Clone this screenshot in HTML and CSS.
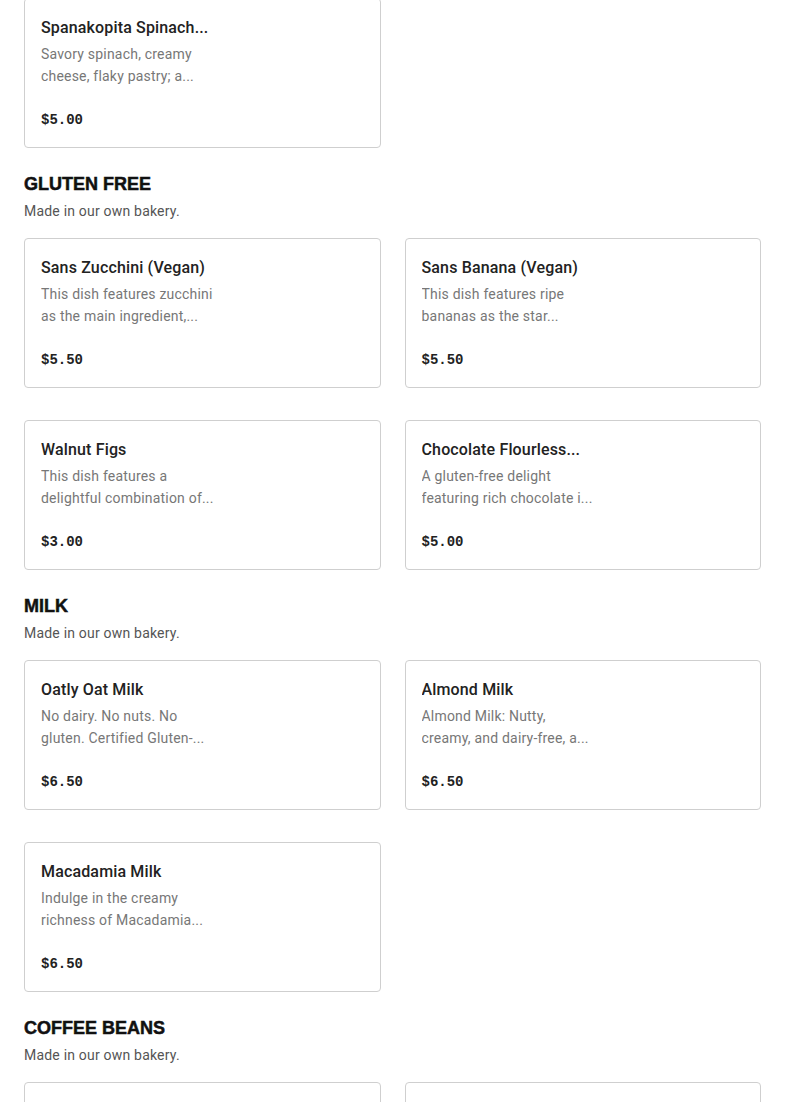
FILE: index.html
```html
<!DOCTYPE html>
<html lang="en">
<head>
<meta charset="utf-8">
<title>Menu</title>
<link rel="stylesheet" href="styles.css">
</head>
<body>
<main class="menu">
  <section class="section section-first">
    <div class="grid">
      <article class="card">
        <h3 class="card-title">Spanakopita Spinach...</h3>
        <p class="card-desc">Savory spinach, creamy<br>cheese, flaky pastry; a...</p>
        <p class="card-price">$5.00</p>
      </article>
    </div>
  </section>

  <section class="section">
    <h2 class="section-title">GLUTEN FREE</h2>
    <p class="section-sub">Made in our own bakery.</p>
    <div class="grid">
      <article class="card">
        <h3 class="card-title">Sans Zucchini (Vegan)</h3>
        <p class="card-desc">This dish features zucchini<br>as the main ingredient,...</p>
        <p class="card-price">$5.50</p>
      </article>
      <article class="card">
        <h3 class="card-title">Sans Banana (Vegan)</h3>
        <p class="card-desc">This dish features ripe<br>bananas as the star...</p>
        <p class="card-price">$5.50</p>
      </article>
      <article class="card">
        <h3 class="card-title">Walnut Figs</h3>
        <p class="card-desc">This dish features a<br>delightful combination of...</p>
        <p class="card-price">$3.00</p>
      </article>
      <article class="card">
        <h3 class="card-title">Chocolate Flourless...</h3>
        <p class="card-desc">A gluten-free delight<br>featuring rich chocolate i...</p>
        <p class="card-price">$5.00</p>
      </article>
    </div>
  </section>

  <section class="section">
    <h2 class="section-title">MILK</h2>
    <p class="section-sub">Made in our own bakery.</p>
    <div class="grid">
      <article class="card">
        <h3 class="card-title">Oatly Oat Milk</h3>
        <p class="card-desc">No dairy. No nuts. No<br>gluten. Certified Gluten-...</p>
        <p class="card-price">$6.50</p>
      </article>
      <article class="card">
        <h3 class="card-title">Almond Milk</h3>
        <p class="card-desc">Almond Milk: Nutty,<br>creamy, and dairy-free, a...</p>
        <p class="card-price">$6.50</p>
      </article>
      <article class="card">
        <h3 class="card-title">Macadamia Milk</h3>
        <p class="card-desc">Indulge in the creamy<br>richness of Macadamia...</p>
        <p class="card-price">$6.50</p>
      </article>
    </div>
  </section>

  <section class="section">
    <h2 class="section-title">COFFEE BEANS</h2>
    <p class="section-sub">Made in our own bakery.</p>
    <div class="grid">
      <article class="card">
        <h3 class="card-title">House</h3>
        <p class="card-desc">Our signature house<br>blend, roasted in small...</p>
        <p class="card-price">$18.00</p>
      </article>
      <article class="card">
        <h3 class="card-title">Single Origin Ethiopia</h3>
        <p class="card-desc">Bright and floral, with<br>notes of citrus and...</p>
        <p class="card-price">$22.00</p>
      </article>
    </div>
  </section>
</main>
</body>
</html>
```

FILE: styles.css
```css
* { box-sizing: border-box; }

html, body {
  margin: 0;
  padding: 0;
  background: #ffffff;
}

body {
  font-family: "Roboto", "Liberation Sans", sans-serif;
  color: #222222;
  overflow: hidden;
}

.menu {
  padding: 0 24px;
}

.section {
  padding-top: 24px;
}

.section-first {
  padding-top: 0;
  margin-top: -2px;
}

.section-title {
  margin: 0;
  font-family: "Liberation Sans", "Roboto", sans-serif;
  font-weight: 700;
  font-size: 18px;
  line-height: 24px;
  color: #111111;
  -webkit-text-stroke: 0.5px #111111;
}

.section-sub {
  margin: 5px 0 0;
  font-size: 14px;
  line-height: 20px;
  letter-spacing: 0.2px;
  color: #555555;
}

.grid {
  margin-top: 17px;
  display: grid;
  grid-template-columns: 1fr 1fr;
  column-gap: 24px;
  row-gap: 32px;
}

.section-first .grid {
  margin-top: 0;
}

.card {
  border: 1px solid #cfcfcf;
  border-radius: 4px;
  padding: 16px;
  height: 150px;
}

.card-title {
  margin: 1px 0 0;
  max-width: 200px;
  font-size: 16px;
  line-height: 24px;
  font-weight: 500;
  letter-spacing: 0.15px;
  color: #222222;
  white-space: nowrap;
  overflow: hidden;
  text-overflow: ellipsis;
}

.card-desc {
  margin: 3px 0 0;
  font-size: 14px;
  line-height: 22px;
  letter-spacing: 0.2px;
  color: #777777;
  white-space: nowrap;
  height: 44px;
  overflow: hidden;
}

.card-price {
  margin: 22px 0 0;
  font-family: "Liberation Mono", "DejaVu Sans Mono", monospace;
  font-weight: 700;
  font-size: 14px;
  line-height: 22px;
  color: #222222;
}
```
